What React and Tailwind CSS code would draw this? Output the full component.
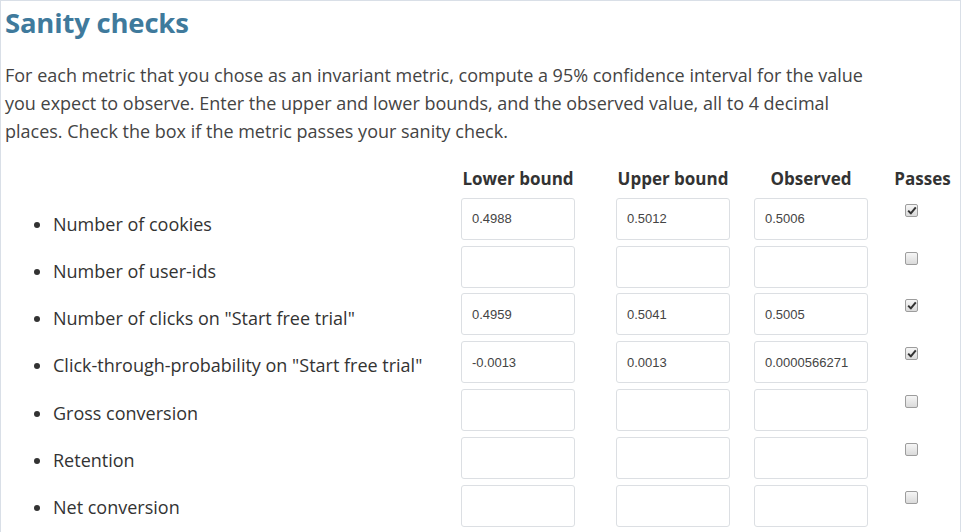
import React from "react";

const metrics = [
  { name: "Number of cookies", lower: "0.4988", upper: "0.5012", observed: "0.5006", passes: true },
  { name: "Number of user-ids", lower: "", upper: "", observed: "", passes: false },
  { name: 'Number of clicks on "Start free trial"', lower: "0.4959", upper: "0.5041", observed: "0.5005", passes: true },
  { name: 'Click-through-probability on "Start free trial"', lower: "-0.0013", upper: "0.0013", observed: "0.0000566271", passes: true },
  { name: "Gross conversion", lower: "", upper: "", observed: "", passes: false },
  { name: "Retention", lower: "", upper: "", observed: "", passes: false },
  { name: "Net conversion", lower: "", upper: "", observed: "", passes: false },
];

const Box = ({ value }) => (
  <div className="w-[114px] h-[42px] border border-[#dcdfe3] rounded-[3px] bg-white flex items-center pl-[10px] text-[13px] text-[#444] font-['Liberation_Sans',Arial,sans-serif]">
    {value}
  </div>
);

const Check = ({ checked }) => (
  <div className="w-[13px] h-[13px] mt-[6px] ml-[12px] rounded-[2px] border border-[#9d9d9d] bg-gradient-to-b from-[#f6f6f6] to-[#dadada] flex items-center justify-center">
    {checked && (
      <svg width="10" height="9" viewBox="0 0 10 9">
        <path d="M1.2 4.6 L3.8 7.4 L8.8 1.4" fill="none" stroke="#333" strokeWidth="2" strokeLinejoin="round" />
      </svg>
    )}
  </div>
);

const App = () => {
  return (
    <div className="w-[961px] h-[532px] border-t border-l border-r border-[#d9dfe7] bg-white pl-[4px] font-['Open_Sans',sans-serif] overflow-hidden">
      <h2 className="text-[27.5px] font-bold text-[#3f7a9c] leading-[40px] mt-[2px] tracking-[-0.2px]">Sanity checks</h2>
      <p className="text-[18px] leading-[28px] text-[#444] mt-[18px] whitespace-nowrap">
        For each metric that you chose as an invariant metric, compute a 95% confidence interval for the value
        <br />
        you expect to observe. Enter the upper and lower bounds, and the observed value, all to 4 decimal
        <br />
        places. Check the box if the metric passes your sanity check.
      </p>

      <div className="flex mt-[20px]">
        <ul className="w-[456px] list-disc pl-[48px] pt-[45px] text-[18px] leading-[28px] text-[#333]">
          {metrics.map((m) => (
            <li key={m.name} className="h-[47.17px]">{m.name}</li>
          ))}
        </ul>

        <div className="grid grid-cols-[155px_138px_139px_59px] gap-y-[5.83px] content-start">
          <div className="w-[114px] text-center text-[17px] font-bold text-[#333] leading-[28px] mb-[-1px]">Lower bound</div>
          <div className="w-[114px] text-center text-[17px] font-bold text-[#333] leading-[28px] mb-[-1px]">Upper bound</div>
          <div className="w-[114px] text-center text-[17px] font-bold text-[#333] leading-[28px] mb-[-1px]">Observed</div>
          <div className="text-center text-[17px] font-bold text-[#333] leading-[28px] mb-[-1px]">Passes</div>
          {metrics.map((m) => (
            <React.Fragment key={m.name}>
              <Box value={m.lower} />
              <Box value={m.upper} />
              <Box value={m.observed} />
              <Check checked={m.passes} />
            </React.Fragment>
          ))}
        </div>
      </div>
    </div>
  );
};

export default App;
